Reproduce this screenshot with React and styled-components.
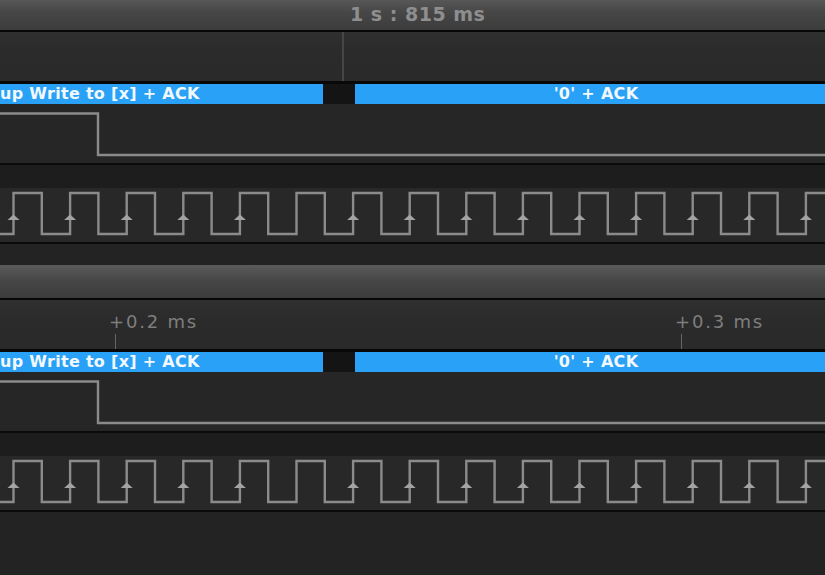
import * as React from "react";
import styled, { createGlobalStyle } from "styled-components";

const GlobalStyle = createGlobalStyle`
  html, body {
    margin: 0;
    padding: 0;
    background: #232323;
  }
  body {
    font-family: "DejaVu Sans", "Liberation Sans", sans-serif;
    overflow: hidden;
  }
`;

const WIDTH = 825;
const PERIOD = 56.6;
const FIRST_RISE = 13.5;
const HIGH_TIME = 28.3;
const NO_ARROW = [5];

const PageSC = styled.div`
  width: ${WIDTH}px;
  height: 578px;
  margin-top: -3px;
  background: #232323;
  overflow: hidden;
`;

const PanelSC = styled.section`
  display: flex;
  flex-direction: column;
  height: 268px;
`;

const HeaderSC = styled.header`
  position: relative;
  height: 33px;
  flex: none;
  background: linear-gradient(#5b5b5b, #474747 45%, #3c3c3c);
  border-bottom: 2px solid #080808;
`;

const HeaderLabelSC = styled.span`
  position: absolute;
  top: 6px;
  left: ${(p) => p.$x}px;
  font-size: 19px;
  font-weight: bold;
  line-height: 22px;
  color: #8e8e8e;
  letter-spacing: 0.5px;
  white-space: nowrap;
`;

const TimelineSC = styled.div`
  position: relative;
  height: 49px;
  flex: none;
  background: linear-gradient(#303030, #2b2b2b 40%, #2a2a2a);
  border-bottom: 3px solid #080808;
`;

const MarkerSC = styled.div`
  position: absolute;
  top: 0;
  bottom: 0;
  left: ${(p) => p.$x}px;
  width: 2px;
  background: #464646;
`;

const TickSC = styled.div`
  position: absolute;
  left: ${(p) => p.$x}px;
  top: 0;
  bottom: 0;
  width: 0;
`;

const TickLabelSC = styled.span`
  position: absolute;
  left: -6px;
  top: 12px;
  font-size: 18px;
  line-height: 20px;
  color: #7e7e7e;
  letter-spacing: 1.8px;
  white-space: nowrap;
`;

const TickLineSC = styled.div`
  position: absolute;
  left: 0;
  top: 34px;
  bottom: 0;
  width: 1px;
  background: #666;
`;

const DecoderBarSC = styled.div`
  display: flex;
  height: 20px;
  flex: none;
`;

const SegmentSC = styled.div`
  ${(p) => (p.$width ? `width: ${p.$width}px; flex: none;` : "flex: 1;")}
  background: #28a1f6;
  color: #f2f8ff;
  font-size: 16px;
  font-weight: bold;
  line-height: 20px;
  letter-spacing: 0.3px;
  white-space: nowrap;
  overflow: hidden;
  text-align: ${(p) => p.$align};
  padding-left: ${(p) => p.$indent || 0}px;
`;

const GapSC = styled.div`
  width: 32px;
  flex: none;
  background: #141414;
`;

const SignalRowSC = styled.div`
  height: ${(p) => p.$height}px;
  flex: none;
  background: ${(p) => p.$bg};
  border-bottom: 2px solid #0a0a0a;
  svg {
    display: block;
  }
`;

const SpacerSC = styled.div`
  height: ${(p) => p.$height}px;
  flex: none;
  background: ${(p) => p.$bg};
`;

const WaveSC = styled.path`
  fill: none;
  stroke: #8b8b8b;
  stroke-width: 2.4;
`;

const ArrowSC = styled.polygon`
  fill: #a3a3a3;
`;

const rises = () => {
  const list = [];
  for (let k = 0; FIRST_RISE + k * PERIOD < WIDTH + 5; k++) {
    list.push({ k, x: FIRST_RISE + k * PERIOD });
  }
  return list;
};

const clockPath = (hi, lo) => {
  let d = `M-5 ${lo}`;
  rises().forEach(({ x }) => {
    d += ` H${x.toFixed(1)} V${hi} H${(x + HIGH_TIME).toFixed(1)} V${lo}`;
  });
  return d + ` H${WIDTH + 5}`;
};

const DataSignal = () => (
  <svg width={WIDTH} height={59}>
    <WaveSC d={`M-5 9.5 H98 V51 H${WIDTH + 5}`} />
  </svg>
);

const ClockSignal = () => (
  <svg width={WIDTH} height={54}>
    <WaveSC d={clockPath(5, 46)} />
    {rises()
      .filter(({ k }) => !NO_ARROW.includes(k))
      .map(({ k, x }) => (
        <ArrowSC
          key={k}
          points={`${x - 6},32 ${x},26.5 ${x + 6},32`}
        />
      ))}
  </svg>
);

const Panel = ({ headerLabel, marker, ticks }) => (
  <PanelSC>
    <HeaderSC>
      {headerLabel && <HeaderLabelSC $x={350}>{headerLabel}</HeaderLabelSC>}
    </HeaderSC>
    <TimelineSC>
      {marker && <MarkerSC $x={marker} />}
      {ticks.map((t) => (
        <TickSC key={t.label} $x={t.x}>
          <TickLabelSC>{t.label}</TickLabelSC>
          <TickLineSC />
        </TickSC>
      ))}
    </TimelineSC>
    <DecoderBarSC>
      <SegmentSC $width={323} $align="left">
        up Write to [x] + ACK
      </SegmentSC>
      <GapSC />
      <SegmentSC $align="center" $indent={12}>
        '0' + ACK
      </SegmentSC>
    </DecoderBarSC>
    <SignalRowSC $height={59} $bg="#262626">
      <DataSignal />
    </SignalRowSC>
    <SpacerSC $height={23} $bg="#1d1d1d" />
    <SignalRowSC $height={54} $bg="#282828">
      <ClockSignal />
    </SignalRowSC>
    <SpacerSC $height={21} $bg="#232323" />
  </PanelSC>
);

const App = () => (
  <>
    <GlobalStyle />
    <PageSC>
      <Panel headerLabel="1 s : 815 ms" marker={342} ticks={[]} />
      <Panel
        ticks={[
          { x: 115, label: "+0.2 ms" },
          { x: 681, label: "+0.3 ms" },
        ]}
      />
    </PageSC>
  </>
);

export default App;
